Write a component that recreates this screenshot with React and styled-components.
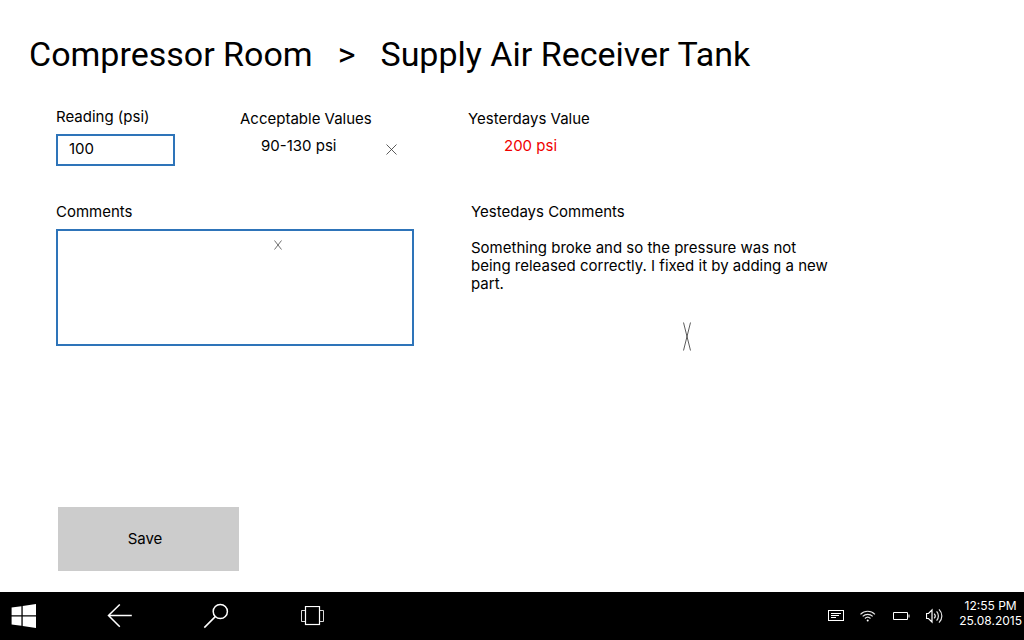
import React from "react";
import styled, { createGlobalStyle } from "styled-components";

const GlobalStyle = createGlobalStyle`
  *, *::before, *::after { box-sizing: border-box; }
  body {
    margin: 0;
    background: #fff;
    color: #000;
    font-family: Inter, "Liberation Sans", sans-serif;
    font-size: 15px;
    line-height: 18px;
  }
  h1, h2, p, dl, dt, dd { margin: 0; font: inherit; }
  svg { display: block; flex: none; }
`;

const Screen = styled.div`
  min-height: 100vh;
  display: flex;
  flex-direction: column;
`;

const Page = styled.main`
  flex: 1;
  display: flex;
  flex-direction: column;
  padding: 32px 29px 21px;
`;

const Breadcrumb = styled.h1`
  display: flex;
  gap: 25px;
  font-family: Roboto, "Liberation Sans", sans-serif;
  font-size: 34px;
  line-height: 44px;
  white-space: nowrap;
`;

const Form = styled.form`
  flex: 1;
  display: flex;
  flex-direction: column;
  padding: 32px 27px 0;
`;

const ReadingRow = styled.div`
  display: grid;
  grid-template-columns: 184px 228px 1fr;
  margin-bottom: 37px;
`;

const CommentRow = styled.div`
  display: grid;
  grid-template-columns: 358px minmax(0, 358px);
  column-gap: 57px;
`;

const Field = styled.div`
  display: flex;
  flex-direction: column;
  align-items: flex-start;
  gap: 8px;
`;

const TextBox = styled.input`
  width: 119px;
  height: 32px;
  padding: 0 11px 3px;
  border: 2px solid #2e74b9;
  border-radius: 0;
  background: #fff;
  color: inherit;
  font: inherit;
  outline: none;
`;

const CommentField = styled(Field)`
  position: relative;
`;

const CommentBox = styled.textarea`
  display: block;
  width: 100%;
  height: 117px;
  padding: 8px 11px;
  border: 2px solid #2e74b9;
  border-radius: 0;
  background: #fff;
  color: inherit;
  font: inherit;
  resize: none;
  outline: none;
`;

const BoxMark = styled.div`
  position: absolute;
  top: 37px;
  left: 218px;
`;

const Stat = styled.dl`
  padding-top: 2px;
`;

const StatValue = styled.dd`
  display: flex;
  align-items: center;
  padding: 9px 0 0 ${(p) => p.$indent};
  color: ${(p) => p.$color || "inherit"};
`;

const StatMark = styled.div`
  padding: 6px 0 0 50px;
`;

const Note = styled.section`
  display: flex;
  flex-direction: column;
`;

const NoteText = styled.p`
  padding-top: 18px;
`;

const NoteMark = styled.div`
  padding: 29px 0 0 212px;
`;

const SaveButton = styled.button`
  width: 181px;
  height: 64px;
  margin: auto 0 0 2px;
  padding: 0 7px 0 0;
  border: 0;
  background: #ccc;
  color: inherit;
  font: inherit;
`;

const Taskbar = styled.footer`
  display: flex;
  align-items: center;
  justify-content: space-between;
  height: 48px;
  background: #000;
  color: #fff;
`;

const Group = styled.div`
  display: flex;
  align-items: center;
  gap: ${(p) => p.$gap};
`;

const BarButton = styled.button`
  display: grid;
  place-items: center;
  width: ${(p) => p.$width};
  height: 48px;
  padding: 0;
  border: 0;
  background: none;
  color: inherit;
`;

const Clock = styled.time`
  padding: 0 2px 6px 0;
  font-size: 12px;
  line-height: 15px;
  text-align: center;
  white-space: pre-line;
`;

const Cross = ({ width, height, opacity = 0.8 }) => (
  <svg width={width} height={height} viewBox={`0 0 ${width} ${height}`} fill="none" stroke="#000" strokeWidth="0.8" opacity={opacity} aria-hidden="true">
    <path d={`M0.5 0.5L${width - 0.5} ${height - 0.5}M${width - 0.5} 0.5L0.5 ${height - 0.5}`} />
  </svg>
);

const Glyph = ({ w, h, stroke = 1, children }) => (
  <svg width={w} height={h} viewBox={`0 0 ${w} ${h}`} fill="none" stroke="#fff" strokeWidth={stroke} aria-hidden="true">
    {children}
  </svg>
);

const WindowsIcon = () => (
  <Glyph w={26} h={26} stroke={0}>
    <path fill="#fff" d="M.6 4.5L10.4 3.2V12.2H.6zM11.7 3L25 1.1V12.2H11.7zM.6 13.5H10.4V22.7L.6 21.4zM11.7 13.5H25V25L11.7 23z" />
  </Glyph>
);

const BackIcon = () => (
  <Glyph w={26} h={24} stroke={1.5}>
    <path d="M1.5 11.5H24.8M12.8 .5L1.5 11.5L12.8 22.8" />
  </Glyph>
);

const SearchIcon = () => (
  <Glyph w={26} h={26} stroke={1.5}>
    <circle cx="17.3" cy="8.5" r="7.1" />
    <path d="M12.3 13.6L1.3 24.6" />
  </Glyph>
);

const TaskViewIcon = () => (
  <Glyph w={24} h={20}>
    <rect x="5.5" y=".5" width="14" height="18" strokeWidth="1.2" />
    <path d="M5 4.5H1.5V15.5H5M20 4.5H23.5V15.5H20" opacity=".85" />
  </Glyph>
);

const KeyboardIcon = () => (
  <Glyph w={16} h={12}>
    <rect x=".5" y=".5" width="15" height="10" />
    <path d="M3 3.5H13M3 5.5H11M3 7.5H8" />
  </Glyph>
);

const WifiIcon = () => (
  <Glyph w={17} h={12}>
    <path d="M.5 4.3C4.5 .2 10.9 .2 14.9 4.3M2.7 6.4C5.5 3.6 9.9 3.6 12.7 6.4M4.9 8.5C6.5 7 8.9 7 10.5 8.5" strokeWidth="1.2" opacity=".9" />
    <circle cx="7.7" cy="10.4" r="1" fill="#fff" stroke="none" />
  </Glyph>
);

const BatteryIcon = () => (
  <Glyph w={17} h={10}>
    <path d="M.5 1.5H14.5V8.5H.5zM16 3.5V6.5" />
  </Glyph>
);

const VolumeIcon = () => (
  <Glyph w={17} h={16}>
    <path d="M.5 5.5H2.5L6 2V14L2.5 10.5H.5z" strokeWidth="1.2" />
    <path d="M8.2 5.6C9.5 7 9.5 9 8.2 10.4M10.6 3.4C13 6 13 10 10.6 12.6M13 1.4C16.8 5.2 16.8 10.8 13 14.6" strokeWidth="1.2" opacity=".9" />
  </Glyph>
);

export default function App() {
  return (
    <Screen>
      <GlobalStyle />
      <Page>
        <Breadcrumb>
          <span>Compressor Room</span>
          <span>&gt;</span>
          <span>Supply Air Receiver Tank</span>
        </Breadcrumb>
        <Form onSubmit={(e) => e.preventDefault()}>
          <ReadingRow>
            <Field>
              <label htmlFor="reading">Reading (psi)</label>
              <TextBox id="reading" type="text" defaultValue="100" />
            </Field>
            <Stat>
              <dt>Acceptable Values</dt>
              <StatValue $indent="21px">
                90-130 psi
                <StatMark>
                  <Cross width={11} height={11} />
                </StatMark>
              </StatValue>
            </Stat>
            <Stat>
              <dt>Yesterdays Value</dt>
              <StatValue $indent="36px" $color="#f00000">200 psi</StatValue>
            </Stat>
          </ReadingRow>
          <CommentRow>
            <CommentField>
              <label htmlFor="comments">Comments</label>
              <CommentBox id="comments" />
              <BoxMark>
                <Cross width={8} height={10} opacity={0.7} />
              </BoxMark>
            </CommentField>
            <Note>
              <h2>Yestedays Comments</h2>
              <NoteText>
                Something broke and so the pressure was not being released correctly. I fixed it by adding a new part.
              </NoteText>
              <NoteMark>
                <Cross width={8} height={29} />
              </NoteMark>
            </Note>
          </CommentRow>
          <SaveButton type="submit">Save</SaveButton>
        </Form>
      </Page>
      <Taskbar>
        <Group $gap="48px">
          <BarButton $width="48px" aria-label="Start"><WindowsIcon /></BarButton>
          <BarButton $width="48px" aria-label="Back"><BackIcon /></BarButton>
          <BarButton $width="48px" aria-label="Search"><SearchIcon /></BarButton>
          <BarButton $width="48px" aria-label="Task view"><TaskViewIcon /></BarButton>
        </Group>
        <Group $gap="16px">
          <BarButton $width="16px" aria-label="Keyboard"><KeyboardIcon /></BarButton>
          <BarButton $width="17px" aria-label="Network"><WifiIcon /></BarButton>
          <BarButton $width="17px" aria-label="Battery"><BatteryIcon /></BarButton>
          <BarButton $width="17px" aria-label="Volume"><VolumeIcon /></BarButton>
          <Clock>{"12:55 PM\n25.08.2015"}</Clock>
        </Group>
      </Taskbar>
    </Screen>
  );
}
